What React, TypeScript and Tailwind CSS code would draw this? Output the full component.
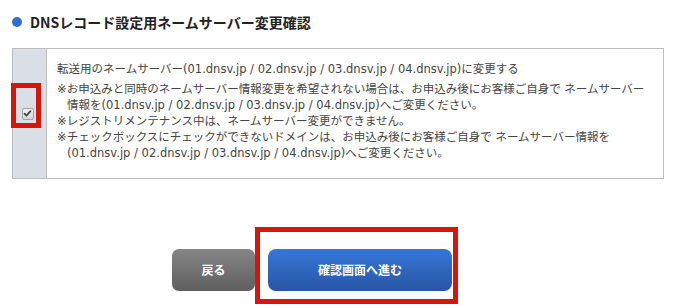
import type React from 'react';

const notes: string[][] = [
  [
    '※お申込みと同時のネームサーバー情報変更を希望されない場合は、お申込み後にお客様ご自身で ネームサーバー',
    '情報を(01.dnsv.jp / 02.dnsv.jp / 03.dnsv.jp / 04.dnsv.jp)へご変更ください。',
  ],
  ['※レジストリメンテナンス中は、ネームサーバー変更ができません。'],
  [
    '※チェックボックスにチェックができないドメインは、お申込み後にお客様ご自身で ネームサーバー情報を',
    '(01.dnsv.jp / 02.dnsv.jp / 03.dnsv.jp / 04.dnsv.jp)へご変更ください。',
  ],
];

const CheckMark: React.FC = () => (
  <span className="flex h-[12px] w-[12px] items-center justify-center rounded-[2px] border border-[#a3a3a3] bg-gradient-to-b from-[#f2f2f2] to-[#d4d4d4]">
    <svg aria-hidden="true" viewBox="0 0 12 12" className="h-[9px] w-[9px]">
      <path d="M2 6.2l2.6 2.6L10 2.8" fill="none" stroke="#3d3d3d" strokeWidth={2.2} strokeLinecap="round" strokeLinejoin="round" />
    </svg>
  </span>
);

export default function App() {
  return (
    <div className="h-[306px] w-[682px] overflow-hidden bg-white font-['Noto_Sans_CJK_JP','Noto_Sans',sans-serif]">
      {/* section title */}
      <div className="flex h-[44px] items-center gap-2 pl-3">
        <span className="h-[10px] w-[10px] rounded-full bg-[#2f6fd4]" />
        <h2 className="text-[14px] font-bold text-[#222]">DNSレコード設定用ネームサーバー変更確認</h2>
      </div>

      {/* option box */}
      <div className="mt-1 ml-3 flex w-[652px] border border-[#bdbdbd]">
        <div className="relative flex w-[34px] shrink-0 items-center justify-center border-r border-[#bdbdbd] bg-[#dadfe6] pr-[4px]">
          <CheckMark />
          <span className="absolute top-[34px] -left-[2px] h-[45px] w-[30px] border-[5px] border-[#d7150a]" />
        </div>
        <div className="whitespace-nowrap pt-3 pb-[17px] pl-[10px] font-['DejaVu_Sans','Noto_Sans_CJK_JP',sans-serif] text-[11.5px] leading-4 text-[#444]">
          <p className="mb-1">
            転送用のネームサーバー(01.dnsv.jp / 02.dnsv.jp / 03.dnsv.jp / 04.dnsv.jp)に変更する
          </p>
          {notes.map((lines) => (
            <p key={lines[0]}>
              {lines.map((line, i) => (
                <span key={line} className={i > 0 ? 'block pl-[10px]' : 'block'}>
                  {line}
                </span>
              ))}
            </p>
          ))}
        </div>
      </div>

      {/* actions */}
      <div className="mt-[70px] flex gap-[13px] pl-[172px]">
        <button
          type="button"
          className="h-[42px] w-[83px] rounded-[7px] bg-gradient-to-b from-[#868686] to-[#5f5f5f] text-[12px] font-bold text-white"
        >
          戻る
        </button>
        <div className="relative">
          <button
            type="button"
            className="h-[42px] w-[184px] rounded-[8px] bg-gradient-to-b from-[#3577d8] to-[#2856a4] text-[12px] font-bold text-white"
          >
            確認画面へ進む
          </button>
          <span className="pointer-events-none absolute -top-[22px] -left-[13px] h-[77px] w-[203px] border-[5px] border-[#d7150a]" />
        </div>
      </div>
    </div>
  );
}
